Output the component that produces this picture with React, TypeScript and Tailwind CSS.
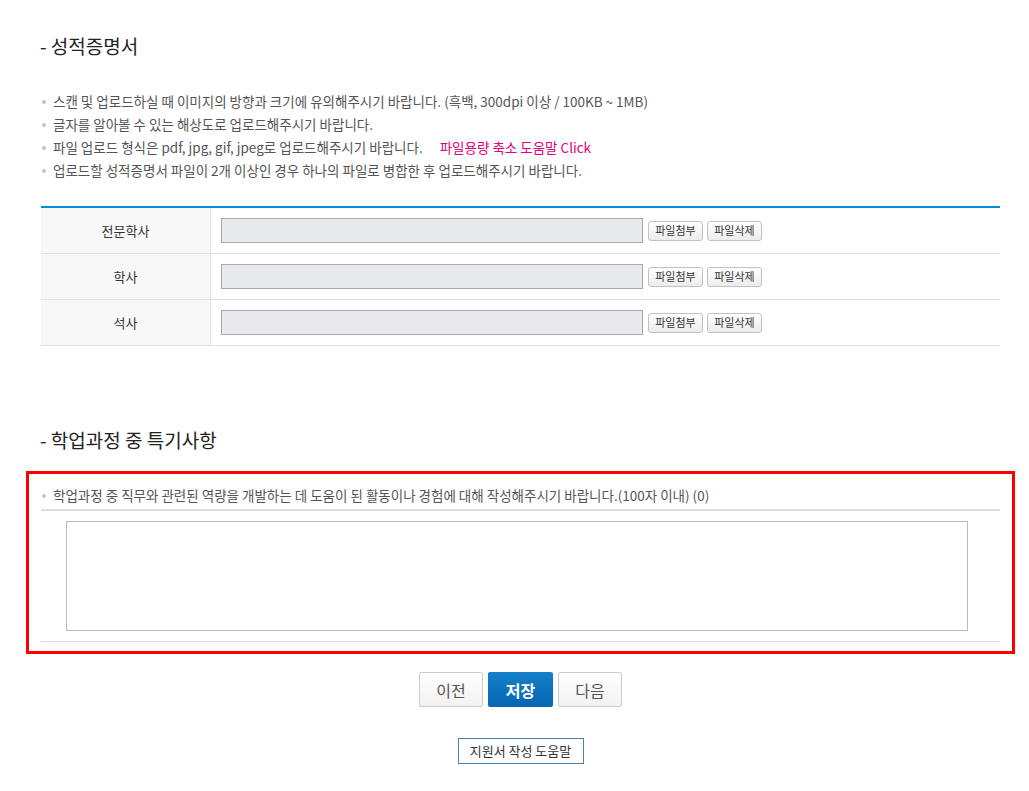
import React from "react";

const font = { fontFamily: '"Noto Sans CJK KR", "Noto Sans", sans-serif' };

function Bullet({ children }: { children: React.ReactNode }) {
  return (
    <li className="flex items-center h-[23px] text-[13.5px] text-[#555]">
      <span className="w-[4px] h-[4px] rounded-full bg-[#c4c4c4] ml-[1px] mr-[7px] shrink-0" />
      <span>{children}</span>
    </li>
  );
}

function FileRow({ label }: { label: string }) {
  return (
    <div className="flex border-b border-[#e0e0e0]">
      <div className="w-[170px] shrink-0 bg-[#f8f8f8] border-r border-[#e2e2e2] flex items-center justify-center text-[13px] text-[#333]">
        {label}
      </div>
      <div className="flex items-center h-[45px] pl-[10px]">
        <div className="w-[422px] h-[25px] bg-[#e8e9ec] border border-[#aaa]" />
        <button className="ml-[5px] h-[20px] w-[55px] rounded-[3px] border border-[#c2c2c2] bg-gradient-to-b from-white to-[#ececec] text-[11px] text-[#333] leading-none">
          파일첨부
        </button>
        <button className="ml-[4px] h-[20px] w-[55px] rounded-[3px] border border-[#c2c2c2] bg-gradient-to-b from-white to-[#ececec] text-[11px] text-[#333] leading-none">
          파일삭제
        </button>
      </div>
    </div>
  );
}

export default function App() {
  return (
    <div style={font} className="w-[1029px] h-[791px] bg-white overflow-hidden">
      <div className="ml-[41px] w-[959px] pt-[33px]">
        <h2 className="text-[19px] leading-[26px] text-[#222] -ml-[1px]">- 성적증명서</h2>
        <ul className="mt-[31px]">
          <Bullet>스캔 및 업로드하실 때 이미지의 방향과 크기에 유의해주시기 바랍니다. (흑백, 300dpi 이상 / 100KB ~ 1MB)</Bullet>
          <Bullet>글자를 알아볼 수 있는 해상도로 업로드해주시기 바랍니다.</Bullet>
          <Bullet>
            파일 업로드 형식은 pdf, jpg, gif, jpeg로 업로드해주시기 바랍니다.
            <span className="ml-[17px] text-[#e4007f]">파일용량 축소 도움말 Click</span>
          </Bullet>
          <Bullet>업로드할 성적증명서 파일이 2개 이상인 경우 하나의 파일로 병합한 후 업로드해주시기 바랍니다.</Bullet>
        </ul>
        <div className="mt-[24px] border-t-2 border-[#0a8bd6]">
          <FileRow label="전문학사" />
          <FileRow label="학사" />
          <FileRow label="석사" />
        </div>

        <h2 className="mt-[81px] text-[19px] leading-[26px] text-[#222] -ml-[1px]">- 학업과정 중 특기사항</h2>

        <div className="mt-[18px] -mx-[15px] px-[12px] border-[3px] border-[#ff0000] pb-[9px]">
          <ul className="pt-[10px] pb-[2px] border-b-2 border-[#ddd]">
            <Bullet>학업과정 중 직무와 관련된 역량을 개발하는 데 도움이 된 활동이나 경험에 대해 작성해주시기 바랍니다.(100자 이내) (0)</Bullet>
          </ul>
          <div className="mt-[10px] ml-[25px] w-[902px] h-[110px] border border-[#bbb] bg-white" />
          <div className="mt-[10px] border-t border-[#ddd]" />
        </div>

        <div className="mt-[18px] flex justify-center gap-[5px]">
          <button className="w-[64px] h-[35px] rounded-[2px] border border-[#ccc] bg-gradient-to-b from-white to-[#f2f2f2] text-[16px] text-[#555]">
            이전
          </button>
          <button className="w-[65px] h-[35px] rounded-[2px] bg-gradient-to-b from-[#1381c9] to-[#0666b4] text-[16px] font-bold text-white">
            저장
          </button>
          <button className="w-[64px] h-[35px] rounded-[2px] border border-[#ccc] bg-gradient-to-b from-white to-[#f2f2f2] text-[16px] text-[#555]">
            다음
          </button>
        </div>

        <div className="mt-[31px] flex justify-center">
          <button className="w-[126px] h-[26px] border border-[#4a82b4] bg-white text-[13px] text-[#333]">
            지원서 작성 도움말
          </button>
        </div>
      </div>
    </div>
  );
}
